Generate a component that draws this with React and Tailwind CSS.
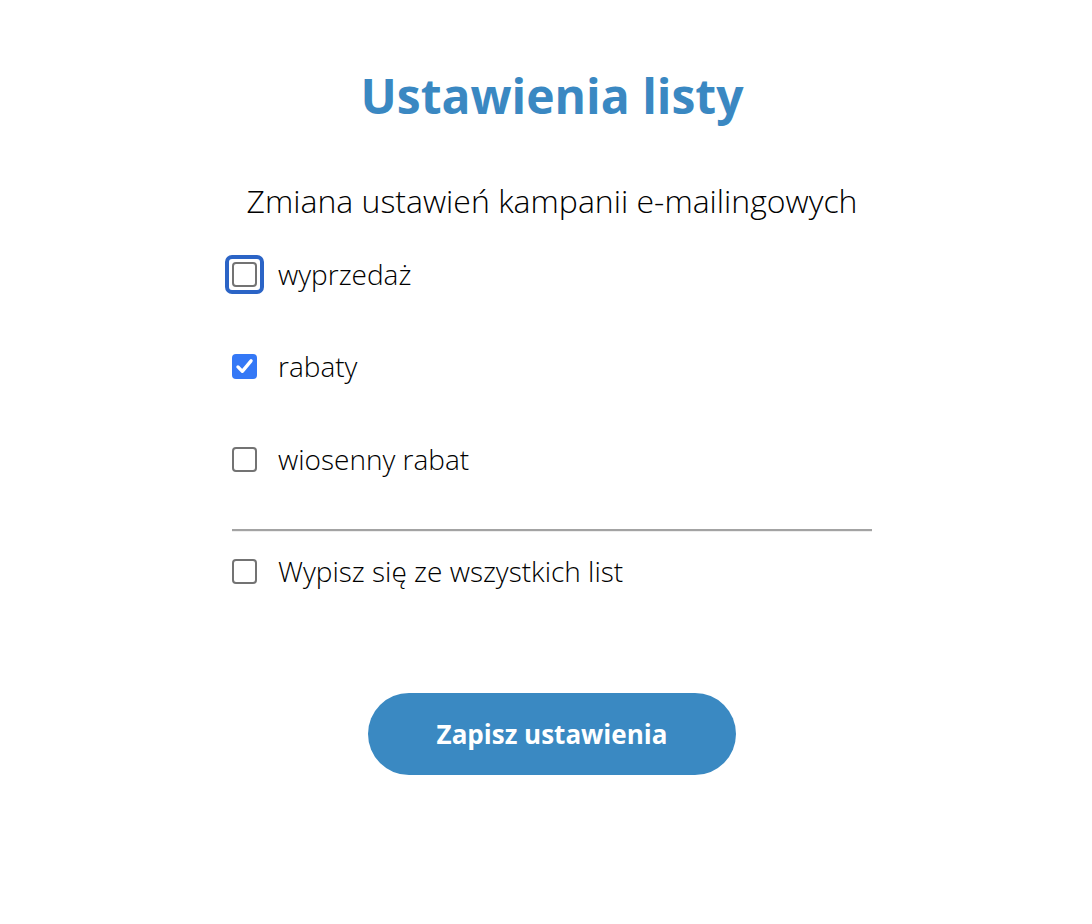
import React, { useState } from 'react';

const lists = [
    { id: 'sale', label: 'wyprzedaż', checked: false, focused: true },
    { id: 'discounts', label: 'rabaty', checked: true },
    { id: 'spring', label: 'wiosenny rabat', checked: false },
];

const Box = ({ checked, focused, onClick }) => (
    <button
        type="button"
        onClick={onClick}
        className={`flex h-[39px] w-[39px] shrink-0 items-center justify-center rounded-[7px] border-[4px] ${focused ? 'border-[#2b64c6]' : 'border-transparent'} -ml-[7px] mr-[14px]`}
    >
        {checked ? (
            <span className="flex h-[25px] w-[25px] items-center justify-center rounded-[4px] bg-[#3478f6]">
                <svg viewBox="0 0 24 24" className="h-[21px] w-[21px]" fill="none" stroke="white" strokeWidth={3.8} strokeLinecap="round" strokeLinejoin="round">
                    <path d="M4.5 12.5l5 5L19.5 5.5" />
                </svg>
            </span>
        ) : (
            <span className="h-[25px] w-[25px] rounded-[4px] border-[2px] border-[#737373] bg-white" />
        )}
    </button>
);

const Row = ({ item, onToggle, className }) => (
    <label className={`flex h-[38px] items-center ${className}`}>
        <Box checked={item.checked} focused={item.focused} onClick={onToggle} />
        <span className="text-[28px] font-light leading-[38px] text-black">{item.label}</span>
    </label>
);

const App = () => {
    const [items, setItems] = useState(lists);
    const [unsubscribe, setUnsubscribe] = useState(false);

    const toggle = (id) => setItems(items.map((i) => (i.id === id ? { ...i, checked: !i.checked } : i)));

    return (
        <div className="min-h-[924px] bg-white pl-[12px]" style={{ fontFamily: '"Open Sans", "Noto Sans", sans-serif' }}>
            <div className="mx-auto flex w-[640px] flex-col">
                <h1 className="mt-[67px] text-center text-[48px] font-bold leading-[58px] text-[#3a88c2]">Ustawienia listy</h1>
                <p className="mt-[54px] text-center text-[32px] font-light leading-[44px] text-black whitespace-nowrap">
                    Zmiana ustawień kampanii e-mailingowych
                </p>

                <div className="mt-[32px] flex flex-col">
                    <Row item={items[0]} onToggle={() => toggle('sale')} />
                    <Row item={items[1]} onToggle={() => toggle('discounts')} className="mt-[54px]" />
                    <Row item={items[2]} onToggle={() => toggle('spring')} className="mt-[55px]" />
                </div>

                <hr className="mt-[51px] border-0 border-t-[2px] border-b border-t-[#a3a3a3] border-b-[#eeeeee]" />

                <Row
                    item={{ label: 'Wypisz się ze wszystkich list', checked: unsubscribe }}
                    onToggle={() => setUnsubscribe(!unsubscribe)}
                    className="mt-[20px]"
                />

                <div className="mt-[103px] flex justify-center">
                    <button
                        type="button"
                        className="h-[82px] w-[368px] rounded-full bg-[#3a89c2] text-[26px] font-bold text-white"
                    >
                        Zapisz ustawienia
                    </button>
                </div>
            </div>
        </div>
    );
};

export default App;
